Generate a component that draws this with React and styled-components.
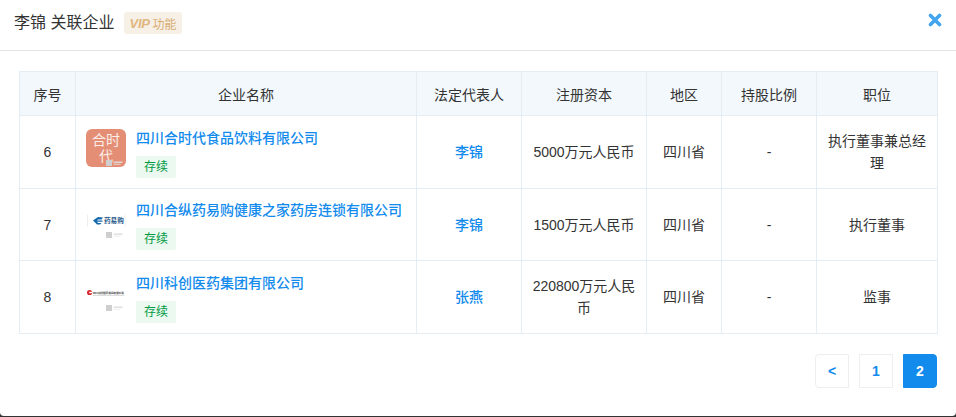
import React from "react";
import styled, { createGlobalStyle } from "styled-components";

const GlobalStyle = createGlobalStyle`
    html, body {
        margin: 0;
        padding: 0;
        background: #333;
        height: 417px;
        overflow: hidden;
    }
    * {
        box-sizing: border-box;
    }
`

const Modal = styled.div`
    width: 956px;
    height: 416px;
    background: #fff;
    border-radius: 0 0 4px 4px;
    font-family: "Liberation Sans", "Noto Sans CJK SC", sans-serif;
    color: #333;
`

const Header = styled.div`
    display: flex;
    align-items: center;
    height: 51px;
    padding: 0 14px;
    border-bottom: 1px solid #e4e4e4;
`

const Title = styled.div`
    font-size: 16px;
    line-height: 22px;
    color: #333;
    margin-top: -4px;
    margin-right: 10px;
`

const VipTag = styled.div`
    display: flex;
    align-items: center;
    gap: 4px;
    width: 58px;
    height: 22px;
    padding-left: 5px;
    margin-top: -4px;
    border-radius: 3px;
    background: #f6f0e7;
    color: #d9ac70;
    font-size: 12px;
`

const VipMark = styled.span`
    width: 19px;
    font-weight: 700;
    font-style: italic;
    font-size: 13px;
    letter-spacing: -0.2px;
    color: #e0b67e;
`

const Close = styled.button`
    margin-left: auto;
    margin-top: -10px;
    border: 0;
    padding: 0;
    background: none;
    display: flex;
`

const Body = styled.div`
    padding: 20px 19px 0;
`

const Table = styled.table`
    width: 918px;
    table-layout: fixed;
    border-collapse: collapse;
    font-size: 14px;
`

const Th = styled.th`
    height: 44px;
    padding: 0;
    font-weight: 400;
    font-size: 14px;
    text-align: center;
    color: #333;
    background: #f2f8fc;
    border: 1px solid #e4edf4;
`

const Td = styled.td`
    padding: 0 10px;
    height: ${({ $h }) => $h}px;
    text-align: center;
    line-height: 22px;
    color: #333;
    border: 1px solid #e4edf4;
`

const CompanyCell = styled.div`
    display: flex;
    align-items: flex-start;
    gap: 10px;
    margin-right: -10px;
    text-align: left;
`

const Logo = styled.div`
    flex: none;
    width: 40px;
    height: 38px;
    margin-top: 2px;
    position: relative;
    display: flex;
    align-items: center;
    justify-content: center;
    border-radius: 6px;
    background: ${({ $bg }) => $bg || "#fff"};
`

const LogoText = styled.div`
    width: 30px;
    font-size: 14px;
    line-height: 16px;
    text-align: center;
    color: #fbeee9;
`

const Stamp = styled.svg`
    position: absolute;
    right: 2px;
    bottom: 1px;
`

const CompanyInfo = styled.div`
    display: flex;
    flex-direction: column;
    align-items: flex-start;
`

const CompanyLink = styled.a`
    font-size: 14px;
    line-height: 22px;
    font-weight: 500;
    color: #128bed;
    white-space: nowrap;
`

const Status = styled.span`
    margin-top: 7px;
    width: 40px;
    height: 22px;
    border-radius: 2px;
    background: #ebf9f0;
    color: #009944;
    font-size: 12px;
    line-height: 22px;
    text-align: center;
`

const PersonLink = styled.a`
    color: #128bed;
    font-weight: 500;
`

const Pager = styled.div`
    display: flex;
    justify-content: flex-end;
    gap: 10px;
    margin-top: 20px;
`

const radiusOf = { left: "4px 0 0 4px", right: "0 4px 4px 0" }

const PageButton = styled.div`
    width: 34px;
    height: 34px;
    display: flex;
    align-items: center;
    justify-content: center;
    font-size: 14px;
    font-weight: 700;
    border-radius: ${({ $side }) => radiusOf[$side] || "0"};
    border: 1px solid ${({ $active }) => ($active ? "#128bed" : "#eeeeee")};
    background: ${({ $active }) => ($active ? "#128bed" : "#fff")};
    color: ${({ $active }) => ($active ? "#fff" : "#128bed")};
`

const StampMark = () => (
    <Stamp width="18" height="6" viewBox="0 0 18 6">
        <rect x="0" y="0" width="6" height="6" fill="#cfcfcf" />
        <rect x="7.5" y="1.5" width="9" height="1.4" fill="#dedede" />
        <rect x="7.5" y="3.8" width="7" height="0.8" fill="#e8e8e8" />
    </Stamp>
)

const YiyaogouLogo = () => (
    <svg width="40" height="13" viewBox="0 0 40 13">
        <rect x="1" y="0.5" width="0.5" height="12" fill="#ddd" />
        <rect x="38.8" y="0.5" width="0.5" height="12" fill="#ddd" />
        <path d="M7 6.5 L12 3 L17 3.5 L15.5 5.5 H12 L11 6.5 H16.5 V7.8 H11 L12 9 H15.5 L14 10.5 H11 Z" fill="#1468ad" />
        <text x="18" y="9.4" fontSize="6.6" fontWeight="700" fill="#27598a">药易购</text>
    </svg>
)

const KechuangLogo = () => (
    <svg width="40" height="10" viewBox="0 0 40 10">
        <circle cx="3.6" cy="4.5" r="2.6" fill="#d8262c" />
        <rect x="3.2" y="3.8" width="3" height="1.4" fill="#fff" />
        <text x="7" y="5.6" fontSize="2.7" fontWeight="700" fill="#444" textLength="31">四川科创医药集团有限公司</text>
        <rect x="7" y="7" width="31" height="0.7" fill="#cfcfcf" />
    </svg>
)

const rows = [
    {
        no: 6,
        name: "四川合时代食品饮料有限公司",
        logo: <LogoText>合时代</LogoText>,
        bg: "#e48e75",
        person: "李锦",
        capital: "5000万元人民币",
        role: "执行董事兼总经理",
        h: 73,
    },
    {
        no: 7,
        name: "四川合纵药易购健康之家药房连锁有限公司",
        logo: <YiyaogouLogo />,
        person: "李锦",
        capital: "1500万元人民币",
        role: "执行董事",
        h: 72,
    },
    {
        no: 8,
        name: "四川科创医药集团有限公司",
        logo: <KechuangLogo />,
        person: "张燕",
        capital: "220800万元人民币",
        role: "监事",
        h: 73,
    },
]

const App = () => {
    return (
        <>
            <GlobalStyle />
            <Modal>
                <Header>
                    <Title>李锦 关联企业</Title>
                    <VipTag>
                        <VipMark>VIP</VipMark>
                        功能
                    </VipTag>
                    <Close aria-label="关闭">
                        <svg width="14" height="14" viewBox="0 0 14 14">
                            <path d="M2.5 2.5 L11.5 11.5 M11.5 2.5 L2.5 11.5" stroke="#42a5f0" strokeWidth="3.6" strokeLinecap="round" />
                        </svg>
                    </Close>
                </Header>
                <Body>
                    <Table>
                        <colgroup>
                            <col width="56" />
                            <col width="341" />
                            <col width="105" />
                            <col width="125" />
                            <col width="75" />
                            <col width="95" />
                            <col width="121" />
                        </colgroup>
                        <thead>
                            <tr>
                                <Th>序号</Th>
                                <Th>企业名称</Th>
                                <Th>法定代表人</Th>
                                <Th>注册资本</Th>
                                <Th>地区</Th>
                                <Th>持股比例</Th>
                                <Th>职位</Th>
                            </tr>
                        </thead>
                        <tbody>
                            {rows.map((row) => (
                                <tr key={row.no}>
                                    <Td $h={row.h}>{row.no}</Td>
                                    <Td $h={row.h}>
                                        <CompanyCell>
                                            <Logo $bg={row.bg}>
                                                {row.logo}
                                                <StampMark />
                                            </Logo>
                                            <CompanyInfo>
                                                <CompanyLink>{row.name}</CompanyLink>
                                                <Status>存续</Status>
                                            </CompanyInfo>
                                        </CompanyCell>
                                    </Td>
                                    <Td $h={row.h}><PersonLink>{row.person}</PersonLink></Td>
                                    <Td $h={row.h}>{row.capital}</Td>
                                    <Td $h={row.h}>四川省</Td>
                                    <Td $h={row.h}>-</Td>
                                    <Td $h={row.h}>{row.role}</Td>
                                </tr>
                            ))}
                        </tbody>
                    </Table>
                    <Pager>
                        <PageButton $side="left">&lt;</PageButton>
                        <PageButton>1</PageButton>
                        <PageButton $active $side="right">2</PageButton>
                    </Pager>
                </Body>
            </Modal>
        </>
    )
}

export default App;
